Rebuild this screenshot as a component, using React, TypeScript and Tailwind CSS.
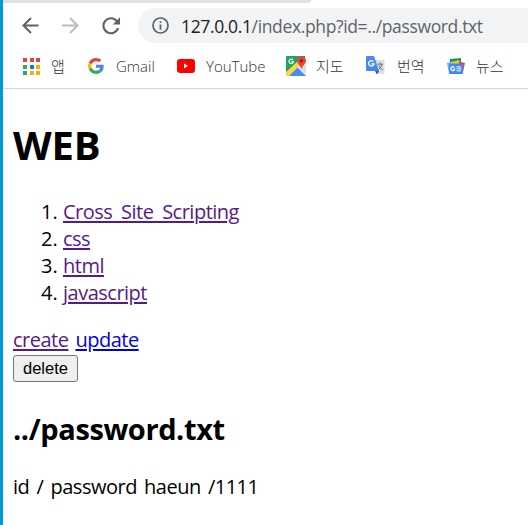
import React from "react";

const dots = ["#ea4335", "#ea4335", "#ea4335", "#34a853", "#1a73e8", "#fbac05", "#34a853", "#fbac05", "#fbac05"];

function AppsIcon() {
  return (
    <svg className="block" width="17" height="17" viewBox="0 0 17 17" shapeRendering="crispEdges">
      {dots.map((c, i) => (
        <rect key={i} x={(i % 3) * 6.5} y={Math.floor(i / 3) * 6.5} width="4" height="4" fill={c} />
      ))}
    </svg>
  );
}

function GoogleIcon() {
  return (
    <svg className="block" width="16" height="16" viewBox="0 0 48 48">
      <path fill="#EA4335" d="M24 9.5c3.54 0 6.71 1.22 9.21 3.6l6.85-6.85C35.9 2.38 30.47 0 24 0 14.62 0 6.51 5.38 2.56 13.22l7.98 6.19C12.43 13.72 17.74 9.5 24 9.5z" />
      <path fill="#4285F4" d="M46.98 24.55c0-1.57-.15-3.09-.38-4.55H24v9.02h12.94c-.58 2.96-2.26 5.48-4.78 7.18l7.73 6c4.51-4.18 7.09-10.36 7.09-17.65z" />
      <path fill="#FBBC05" d="M10.53 28.59c-.48-1.45-.76-2.99-.76-4.59s.27-3.14.76-4.59l-7.98-6.19C.92 16.46 0 20.12 0 24s.92 7.54 2.56 10.78l7.97-6.19z" />
      <path fill="#34A853" d="M24 48c6.48 0 11.93-2.13 15.89-5.81l-7.73-6c-2.15 1.45-4.92 2.3-8.16 2.3-6.26 0-11.57-4.22-13.47-9.91l-7.98 6.19C6.51 42.62 14.62 48 24 48z" />
    </svg>
  );
}

function YouTubeIcon() {
  return (
    <svg className="block" width="18" height="14" viewBox="0 0 18 14">
      <rect width="18" height="14" rx="3.2" fill="#f00" />
      <path d="M7 4.5v5L11 7z" fill="#fff" />
    </svg>
  );
}

function MapsIcon() {
  return (
    <svg className="block" width="20" height="20" viewBox="0 0 20 20">
      <path d="M1 0H19V19H1Q0 19 0 18V1Q0 0 1 0Z" fill="#1ea362" />
      <path d="M0 18 14 6 20 12V20H1Z" fill="#e8e8e8" />
      <path d="M0 16 11.5 5.5 14.5 8 2.5 20H1Q0 20 0 18Z" fill="#fdd835" />
      <path d="M3 20 11.5 11.5 20 20Z" fill="#4a8af4" />
      <path d="M13 10 20 5V18L12.5 11Z" fill="#dedede" />
      <path d="M15.5 0.5C12.8.5 11 2.3 11 4.8c0 3.1 3.8 4.5 4.5 8.7C16.2 9.3 20 7.9 20 4.8 20 2.3 18.2.5 15.5.5Z" fill="#ea4335" />
      <circle cx="15.5" cy="4.7" r="1.5" fill="#8b1b1b" />
      <path d="M7 4.1A2.2 2.2 0 1 0 7.4 5.7H5.4" fill="none" stroke="#fff" strokeWidth="1.2" />
    </svg>
  );
}

function TranslateIcon() {
  return (
    <svg className="block" width="19" height="19" viewBox="0 0 19 19">
      <path d="M8 4H17.5Q18.5 4 18.5 5V17Q18.5 18 17.5 18H12Z" fill="#dedede" />
      <path d="M9 15H13L11 18.5Z" fill="#3949ab" />
      <path d="M1.2 0H8L13 15H1.2Q0 15 0 13.8V1.2Q0 0 1.2 0Z" fill="#4688f1" />
      <path d="M7.3 5.5A2.7 2.7 0 1 0 8 7.8H5.4" fill="none" stroke="#fff" strokeWidth="1.3" />
      <path d="M11.5 8.2H17M14.1 6.6V8.2M16 8.4Q15 12 12.5 13.5M12.8 9.5Q14 12.5 17 14" fill="none" stroke="#607988" strokeWidth="1" />
    </svg>
  );
}

function NewsIcon() {
  return (
    <svg className="block" width="18" height="16" viewBox="0 0 18 16">
      <path d="M3 1 14 0V6H3Z" fill="#0f9d58" />
      <path d="M0 5 4 4V13H1.5Z" fill="#4fc3f7" />
      <path d="M4 4 12 2.2 14 6H4Z" fill="#fbc02d" />
      <path d="M12 3.5 18 5 16 14H12Z" fill="#ea4335" />
      <rect x="2" y="5.5" width="14" height="10.5" rx="1" fill="#4285f4" />
      <path d="M7.4 9.3A2 2 0 1 0 7.8 11H6" fill="none" stroke="#fff" strokeWidth="1.2" />
      <path d="M9.5 8.8H14M9.5 10.8H14.5M9.5 12.8H14" stroke="#fff" strokeWidth="1" />
    </svg>
  );
}

const label = "block whitespace-nowrap text-[#303336] text-[15px] leading-5 font-light";
const link = "underline decoration-2 underline-offset-2 [word-spacing:4px] tracking-[-0.5px]";

export default function App() {
  return (
    <div className="flex h-[525px] w-[528px] overflow-hidden bg-white font-['Open_Sans','Noto_Sans_CJK_KR',sans-serif]">
      <div className="w-[3px] shrink-0 bg-[#0099db]" />
      <div className="flex min-w-0 grow flex-col">
        <header className="h-[89px] shrink-0 border-b border-[#d5d7da]">
          <div className="h-[3px] bg-white">
            <div className="h-[3px] w-[308px] rounded-br-[6px] bg-[#dee1e6]" />
          </div>
          <div className="flex h-[45px] items-center pl-[19px]">
            <svg className="block shrink-0" width="17" height="17" viewBox="0 0 17 17" fill="none" stroke="#5f6368" strokeWidth="2">
              <path d="M16.5 8.5H2M9 1 1.5 8.5 9 16" />
            </svg>
            <svg className="ml-[23px] block shrink-0" width="17" height="17" viewBox="0 0 17 17" fill="none" stroke="#babcbe" strokeWidth="2">
              <path d="M0 8.5H15M8 1 15.5 8.5 8 16" />
            </svg>
            <svg className="ml-[23px] block shrink-0" width="18" height="18" viewBox="0 0 18 18">
              <path d="M15 4.3A7.5 7.5 0 1 0 16.1 11" fill="none" stroke="#5f6368" strokeWidth="2.1" />
              <path d="M18 .3V7.5H10.8Z" fill="#5f6368" />
            </svg>
            <div className="ml-[18px] flex h-[35px] grow items-center rounded-l-full bg-[#f1f3f4] pl-[14px]">
              <svg className="block shrink-0" width="17" height="17" viewBox="0 0 17 17">
                <circle cx="8.5" cy="8.5" r="7.5" fill="none" stroke="#5f6368" strokeWidth="1.7" />
                <path d="M8.5 7.5V12.7M8.5 4.2V6" stroke="#5f6368" strokeWidth="1.8" />
              </svg>
              <span className="ml-[12px] whitespace-nowrap text-[17.5px] leading-6 tracking-[-0.36px] text-[#5f6368]">
                <span className="text-[#202124]">127.0.0.1</span>/index.php?id=../password.txt
              </span>
            </div>
          </div>
          <nav className="flex h-9 items-center pb-px pl-5">
            <div className="pt-px"><AppsIcon /></div>
            <span className={`${label} ml-[11px] w-[15px]`}>앱</span>
            <div className="ml-[22px]"><GoogleIcon /></div>
            <span className={`${label} ml-[12px] w-[39px]`}>Gmail</span>
            <div className="ml-[22px]"><YouTubeIcon /></div>
            <span className={`${label} ml-[11px] w-[60px]`}>YouTube</span>
            <div className="ml-5"><MapsIcon /></div>
            <span className={`${label} ml-[10px] w-[30px]`}>지도</span>
            <div className="ml-5"><TranslateIcon /></div>
            <span className={`${label} ml-3 w-[30px]`}>번역</span>
            <div className="ml-5"><NewsIcon /></div>
            <span className={`${label} ml-[11px]`}>뉴스</span>
          </nav>
        </header>
        <main className="px-[10px] text-[20px] leading-[27px] text-black">
          <h1 className="mt-[29px] h-[53px] whitespace-nowrap text-[40px] font-bold leading-[53px] tracking-[-0.2px]">WEB</h1>
          <ol className="mt-[27px] list-outside list-decimal pl-[50px] text-black">
            <li><a className={`${link} text-[#551a8b]`}>Cross Site Scripting</a></li>
            <li><a className={`${link} text-[#551a8b]`}>css</a></li>
            <li><a className={`${link} text-[#551a8b]`}>html</a></li>
            <li><a className={`${link} text-[#551a8b]`}>javascript</a></li>
          </ol>
          <div className="mt-5 flex h-[27px] gap-[7px]">
            <a className={`${link} text-[#551a8b]`}>create</a>
            <a className={`${link} text-[#0000ee]`}>update</a>
          </div>
          <button className="mt-[2px] block h-[27px] w-[65px] rounded-[3px] border border-[#767676] bg-[#efefef] pb-[2px] font-['Liberation_Sans',Arial,sans-serif] text-[16.5px] leading-[22px]">delete</button>
          <h2 className="mt-[27px] h-10 whitespace-nowrap text-[29px] font-bold leading-10 tracking-[-0.4px]">../password.txt</h2>
          <p className="mt-[24px] whitespace-nowrap tracking-[-0.5px] [word-spacing:2.5px]">id / password haeun /1111</p>
        </main>
      </div>
    </div>
  );
}
